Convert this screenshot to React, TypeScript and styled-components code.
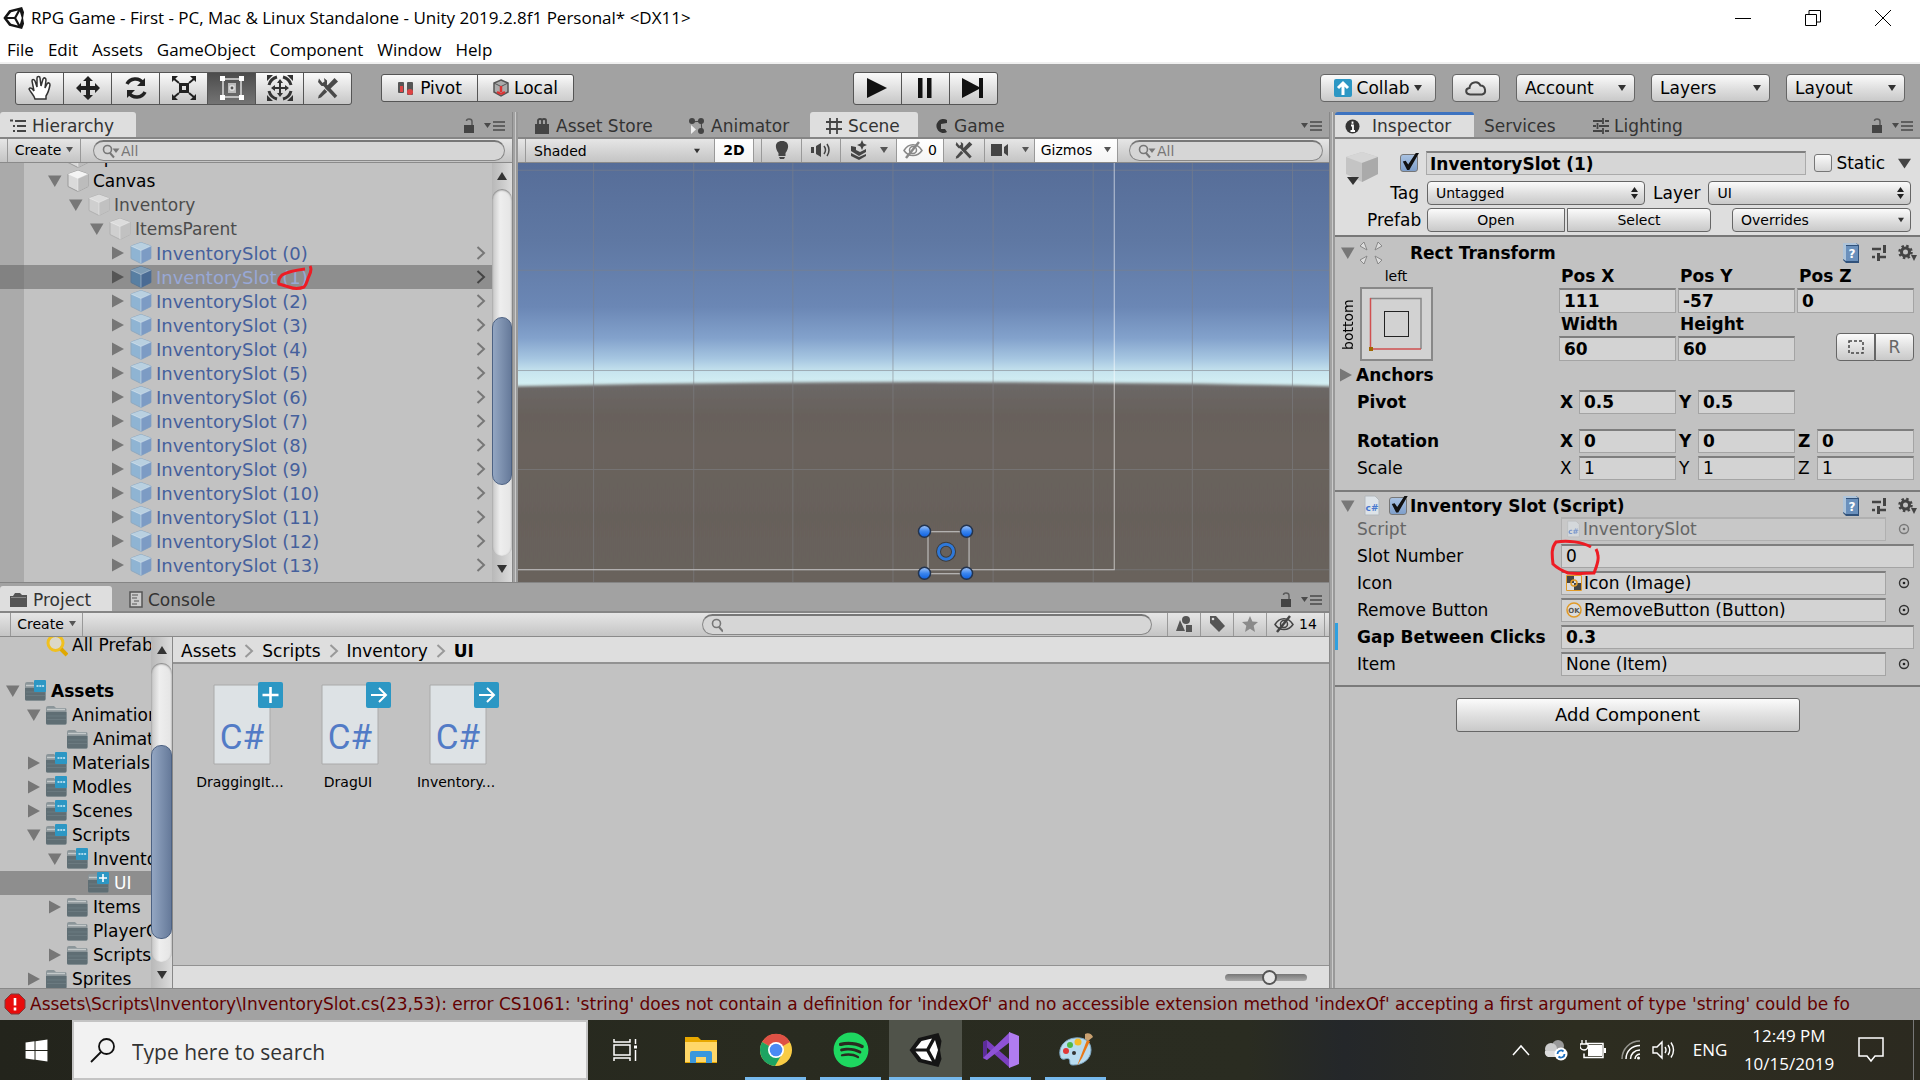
import React from "react";
import styled, { createGlobalStyle, css } from "styled-components";
import { FaSpotify, FaWindows } from "react-icons/fa";

const ui = `"DejaVu Sans", Verdana, sans-serif`;
const system = `"Open Sans", "Segoe UI", sans-serif`;

const Global = createGlobalStyle`
  * { box-sizing: border-box; }
  body { margin: 0; background: #a2a2a2; font-family: ${ui}; font-size: 17px; color: #000; }
  button, input, select { font: inherit; color: inherit; margin: 0; }
  button { cursor: default; }
  svg { display: block; flex: none; }
`;

/* ---------- icons ---------- */

const Caret = ({ size = 8, color = "#333" }: { size?: number; color?: string }) => (
  <svg width={size} height={size} viewBox="0 0 8 8"><path d="M0 1h8L4 7z" fill={color} /></svg>
);
const Fold = ({ open, dark }: { open?: boolean; dark?: boolean }) => (
  <svg width="14" height="14" viewBox="0 0 14 14">
    <path d={open ? "M0 1.500h13.500L6.800 13z" : "M1 .5v13L13 7z"} fill={dark ? "#555" : "#777"} />
  </svg>
);
const Cube = ({ tone, size = 24 }: { tone: "plain" | "faded" | "blue" | "dark"; size?: number }) => {
  const c = {
    plain: ["#f4f4f4", "#dadada", "#bcbcbc", "#9a9a9a"],
    faded: ["#dcdcdc", "#cfcfcf", "#c1c1c1", "#b0b0b0"],
    blue: ["#b9d0e0", "#8fb4d3", "#7c9bc4", "#8fa9c0"],
    dark: ["#7f9db6", "#587fa2", "#4a6b94", "#5a7794"],
  }[tone];
  return (
    <svg width={size} height={size} viewBox="0 0 24 24">
      <path d="M12 1.500 22 5v12.500L12 22.500 2 17.500V5z" fill={c[1]} stroke={c[3]} strokeWidth="1" />
      <path d="M12 1.500 22 5 12 9.500 2 5z" fill={c[0]} />
      <path d="M22 5v12.500L12 22.500v-13z" fill={c[2]} />
      <path d="M2 5 12 9.500 22 5M12 9.500v13" stroke="#fff" strokeOpacity=".35" fill="none" />
    </svg>
  );
};
const Lock = () => (
  <svg width="12" height="18" viewBox="0 0 12 18">
    <path d="M9 8V4.500C9 2.800 7.500 2 6 2S3.500 2.800 3.500 4" fill="none" stroke="#5a5a5a" strokeWidth="1.500" />
    <rect x="1" y="8" width="10" height="8" fill="#444" />
  </svg>
);
const PaneMenu = () => (
  <svg width="21" height="14" viewBox="0 0 21 14">
    <path d="M0 4h7L3.500 9z" fill="#4a4a4a" />
    <path d="M9 3h12M9 7h12M9 11h12" stroke="#4a4a4a" strokeWidth="1.600" />
  </svg>
);
const Magnifier = ({ menu }: { menu?: boolean }) => (
  <svg width={menu ? 18 : 12} height="16" viewBox={menu ? "0 0 18 16" : "0 0 12 16"}>
    <circle cx="5.500" cy="6.500" r="4" fill="none" stroke="#777" strokeWidth="1.600" />
    <path d="m8 10 4 4.500" stroke="#777" strokeWidth="2" />
    {menu && <path d="M10.500 5.500h7L14 10z" fill="#777" />}
  </svg>
);
const Chevron = ({ color = "#777" }: { color?: string }) => (
  <svg width="10" height="14" viewBox="0 0 10 14"><path d="m1.500 1 6.500 6-6.500 6" fill="none" stroke={color} strokeWidth="2" /></svg>
);
const UnityMark = ({ size }: { size: number }) => (
  <svg width={size} height={size} viewBox="0 0 33 34">
    <path d="M0 17 9 5 29 0l3 8-1.500 9L32 26l-3 8-20-5z" fill="#151515" />
    <path d="M6 15.500 12 8l10.500-2.500L17 15.500zM6 18.500h11l5.500 10L12 26zM20 17l5.500-10L28.500 17l-3 10z" fill="#fff" />
  </svg>
);
const Wrench = ({ size = 24 }: { size?: number }) => (
  <svg width={size} height={size} viewBox="0 0 24 24">
    <path d="m8 8 12 13" stroke="#4a4a4a" strokeWidth="3.400" />
    <path d="M3 2.500 2 6l3.500 4H9l2-2V4.500L8 2l.5 3.500L6.500 7z" fill="#4a4a4a" />
    <path d="M18.500 2 22 5.500 12 15l-3-3z" fill="#4a4a4a" />
    <path d="m8.500 13 2.700 2.700L5 21.500l-3 1 .8-3z" fill="#4a4a4a" />
  </svg>
);
const EyeOff = ({ light }: { light?: boolean }) => (
  <svg width="20" height="18" viewBox="0 0 20 18" fill="none" stroke={light ? "#888" : "#444"}>
    <path d="M1 9.500C4 4.500 8 3.800 10 3.800s6 .9 9 5.700c-3 4.500-7 5-9 5s-6-.5-9-5z" strokeWidth="1.500" />
    <circle cx="10" cy="9" r="3.500" strokeWidth="1.500" />
    <path d="M3 17 16 1" strokeWidth="2.500" />
  </svg>
);
const Folder = ({ badge }: { badge?: "more" | "plus" }) => (
  <svg width="22" height="22" viewBox="0 0 22 22">
    <path d="M1 4q0-2 2-2h6l2 2h9q1.500 0 1.500 1.500V19q0 1.500-1.500 1.500H2.500Q1 20.500 1 19z" fill="#8b9599" />
    <path d="M2 5.500h18" stroke="#c4c9ca" strokeWidth="1.500" />
    <path d="M1 8h20.500v11q0 1.500-1.500 1.500H2.500Q1 20.500 1 19z" fill="#5f6e74" />
    <path d="M2 12h19M2 15.500h19" stroke="#6b7a80" />
    {badge && <rect x="10" y="0" width="12" height="12" rx="1" fill="#2c97c4" />}
    {badge === "more" && <path d="M12.500 6h2m.8 0h2m.8 0h2" stroke="#d8f0fa" strokeWidth="1.600" />}
    {badge === "plus" && <path d="M16 2v8M12 6h8" stroke="#fff" strokeWidth="1.600" />}
  </svg>
);
const Book = () => (
  <svg width="18" height="22" viewBox="0 0 18 22">
    <path d="M1 1h13l3 2v18H4l-3-3z" fill="#31527b" />
    <path d="M4 4h12v15H4z" fill="#6a90bc" /><path d="M1 1h13l2 2H4v16l-3-2z" fill="#aec4da" />
    <text x="10" y="16" textAnchor="middle" fontSize="12" fontWeight="bold" fill="#fff">?</text>
  </svg>
);
const Preset = () => (
  <svg width="16" height="20" viewBox="0 0 16 20" stroke="#444">
    <path d="M1 6h9M1 14h3M9 14h6" strokeWidth="2.500" /><path d="M13.500 2v8M7.500 10v8" strokeWidth="3" />
  </svg>
);
const Gear = () => (
  <svg width="20" height="20" viewBox="0 0 20 20">
    <circle cx="7.500" cy="9" r="4" fill="none" stroke="#444" strokeWidth="3" />
    <circle cx="7.500" cy="9" r="6" fill="none" stroke="#444" strokeWidth="2.500" strokeDasharray="2.400 2.310" />
    <path d="M13 12h6l-3 6z" fill="#444" />
  </svg>
);
const ScriptIcon = ({ faded, size = 18 }: { faded?: boolean; size?: number }) => (
  <svg width={size} height={size + 3} viewBox="0 0 18 21" opacity={faded ? 0.6 : 1}>
    <path d="M2 1h10l4 4v15H2z" fill="#dde3e8" stroke="#b4b8bb" />
    <text x="9" y="16" textAnchor="middle" fontSize="9" fill="#4778cf" fontWeight="bold">c#</text>
  </svg>
);
const Target = ({ faded }: { faded?: boolean }) => (
  <svg width="12" height="12" viewBox="0 0 12 12" opacity={faded ? 0.5 : 1}>
    <circle cx="6" cy="6" r="4.500" fill="none" stroke="#333" strokeWidth="1.400" /><circle cx="6" cy="6" r="1.300" fill="#222" />
  </svg>
);

/* ---------- window chrome ---------- */

const Window = styled.div`display: flex; flex-direction: column; min-height: 100vh;`;
const TitleBar = styled.header`
  display: flex; align-items: center; height: 36px; padding: 0 2px 0 3px;
  background: #fff; font: 17px/24px ${system};
`;
const TitleText = styled.h1`margin: 0; padding-left: 6px; flex: 1; font: inherit; white-space: nowrap;`;
const WindowButton = styled.button`
  display: grid; place-items: center; width: 70px; height: 34px; padding: 0; border: 0; background: none;
`;
const MenuBar = styled.nav`
  display: flex; gap: 14px; height: 28px; padding: 1px 7px 0; background: #fff; border-bottom: 2px solid #f0f0f0;
  font: 17px/24px ${system};
`;
const MenuItem = styled.button`padding: 0; border: 0; background: none;`;

const face = css`
  background: linear-gradient(#fbfbfb, #dedede 55%, #c9c9c9); border: 1px solid #666;
`;
const MainToolbar = styled.div`
  display: grid; grid-template-columns: 48fr auto 52fr; align-items: center; height: 48px; padding: 0 15px;
  background: #a2a2a2;
`;
const ToolSide = styled.div<{ $end?: boolean }>`
  display: flex; align-items: center; gap: ${p => (p.$end ? 16 : 29)}px; justify-content: ${p => (p.$end ? "flex-end" : "flex-start")};
`;
const Group = styled.div`
  display: flex; border: 1px solid #555; border-radius: 3px; overflow: hidden; background: #555; gap: 1px;
`;
const Tool = styled.button<{ $active?: boolean }>`
  display: grid; place-items: center; width: 47px; height: 31px; padding: 0; border: 0;
  background: ${p => (p.$active ? "linear-gradient(#4c4c4c, #747474)" : "linear-gradient(#fafafa, #dedede 55%, #c6c6c6)")};
`;
const WordTool = styled.button`
  display: flex; align-items: center; justify-content: center; gap: 5px; width: 95px; height: 26px; padding: 0; border: 0; font-size: 17px;
  background: linear-gradient(#fafafa, #dedede 55%, #cdcdcd);
`;
const BarButton = styled.button<{ $w: number }>`
  ${face} display: flex; align-items: center; justify-content: center; gap: 5px; width: ${p => p.$w}px; height: 28px; padding: 0; border-radius: 4px;
`;

const SelectBox = styled.span<{ $w?: number; $grow?: boolean; $small?: boolean; $flat?: boolean }>`
  ${p => !p.$flat && face}
  display: flex; align-items: center; height: ${p => (p.$small ? 24 : 28)}px; border-radius: 4px; padding-right: ${p => (p.$small ? 6 : 8)}px;
  ${p => p.$w && `width: ${p.$w}px;`} ${p => p.$grow && "flex: 1; min-width: 0;"}
  font-size: ${p => (p.$small ? 14 : 17)}px;
  select { appearance: none; flex: 1; min-width: 0; height: 100%; border: 0; background: none; padding: 0 0 0 8px; }
`;
type DropProps = { label: string; value: string; w?: number; grow?: boolean; small?: boolean; flat?: boolean; updown?: boolean; id?: string };
const Drop = ({ label, value, w, grow, small, flat, updown, id }: DropProps) => (
  <SelectBox $w={w} $grow={grow} $small={small} $flat={flat}>
    <select id={id} aria-label={label}><option>{value}</option></select>
    {updown ? (
      <svg width="7" height="14" viewBox="0 0 7 14"><path d="M0 6h7L3.500 1zM0 8h7l-3.500 5z" fill="#222" /></svg>
    ) : <Caret size={small ? 6 : 8} />}
  </SelectBox>
);

/* ---------- dock ---------- */

const Dock = styled.main`display: flex; flex: 1; min-height: 0; background: #a2a2a2;`;
const Left = styled.div`display: flex; flex-direction: column; flex: 1; min-width: 0;`;
const Upper = styled.div`display: flex; flex: 1; min-height: 0;`;
const Pane = styled.section<{ $w?: number; $h?: number }>`
  display: flex; flex-direction: column; min-width: 0; min-height: 0;
  ${p => (p.$w ? `flex: none; width: ${p.$w}px;` : p.$h ? `flex: none; height: ${p.$h}px;` : "flex: 1;")}
`;
const Splitter = styled.div<{ $row?: boolean }>`
  flex: none; background: linear-gradient(90deg, #888 1px, #a2a2a2 1px, #a2a2a2 3px, #cacaca 3px, #cacaca 4px, #999 4px);
  ${p => (p.$row ? "height: 4px; background: #a2a2a2; border-top: 1px solid #858585;" : "width: 6px;")}
`;
const Tabs = styled.div`
  display: flex; align-items: stretch; height: 27px; padding-right: 7px; background: #a2a2a2; border-bottom: 2px solid #858585;
`;
const Tab = styled.button<{ $w: number; $active?: boolean; $focus?: boolean; $gap?: number }>`
  display: flex; align-items: center; gap: ${p => p.$gap ?? 5}px; width: ${p => p.$w}px; padding: 2px 0 0 10px; border: 0; color: #333; white-space: nowrap;
  background: ${p => (p.$active ? "#dedede" : "none")}; border-radius: 3px 3px 0 0;
  ${p => p.$focus && "border-top: 3px solid #3d73c0; padding-top: 0;"}
`;
const TabTail = styled.div`display: flex; align-items: center; gap: 9px; margin-left: auto; padding-top: 2px;`;
const Strip = styled.div`
  display: flex; align-items: stretch; flex: none; height: 24px; font-size: 14px;
  background: linear-gradient(#e6e6e6, #c4c4c4); border-bottom: 1px solid #8a8a8a;
`;
const StripButton = styled.button<{ $w: number; $on?: boolean }>`
  display: flex; align-items: center; justify-content: center; gap: 5px; width: ${p => p.$w}px; padding: 0 0 2px; border: 0; border-right: 1px solid #999;
  background: ${p => (p.$on ? "linear-gradient(#fff, #f4f4f4)" : "none")}; font-weight: normal;
`;
const StripGap = styled.span<{ $w: number }>`width: ${p => p.$w}px; border-right: 1px solid #999;`;
const StripEnd = styled.span<{ $w: number }>`width: ${p => p.$w}px; flex: none;`;
const Fill = styled.span`flex: 1;`;
const Search = styled.label<{ $w?: number }>`
  display: flex; align-items: center; gap: 1px; height: 21px; align-self: center; padding: 0 8px; border: 1px solid #888; border-top: 2px solid #777;
  border-radius: 11px; background: #d6d6d6; ${p => (p.$w ? `width: ${p.$w}px;` : "flex: 1;")} min-width: 0;
  input { flex: 1; min-width: 0; width: 0; border: 0; background: none; padding: 0; height: 18px; outline: 0; }
  input::placeholder { color: #777; opacity: 1; }
`;

/* ---------- trees ---------- */

const TreeFrame = styled.div<{ $w?: number }>`
  display: flex; min-height: 0; background: #c2c2c2; ${p => (p.$w ? `flex: none; width: ${p.$w}px; border-right: 1px solid #888;` : "flex: 1 1 0;")}
`;
const Tree = styled.ul<{ $shift: number; $gutter?: boolean }>`
  list-style: none; margin: 0; padding: 0; flex: 1; min-width: 0; overflow: hidden; height: 100%;
  background: ${p => (p.$gutter ? "linear-gradient(90deg, #aaa 24px, #c2c2c2 24px)" : "#c2c2c2")};
  & > li:first-child { margin-top: -${p => p.$shift}px; }
`;
const Row = styled.li<{ $indent: number; $selected?: boolean; $color?: string; $prefab?: boolean; $bold?: boolean; $spaced?: boolean }>`
  display: flex; align-items: center; height: 24px; padding-left: ${p => p.$indent}px; padding-right: 6px; white-space: nowrap;
  color: ${p => p.$color || "#000"}; font-size: ${p => (p.$prefab ? 18 : 17)}px; font-weight: ${p => (p.$bold ? "bold" : "normal")};
  margin-bottom: ${p => (p.$spaced ? 22 : 0)}px;
  background: ${p => (p.$selected ? "rgba(90, 90, 90, .5)" : "none")};
  & > svg:first-child { margin-right: 4px; }
  & > svg:last-child { margin-left: auto; }
`;
const RowLabel = styled.span<{ $wide?: boolean }>`position: relative; margin-left: ${p => (p.$wide ? 5 : 3)}px;`;
const ScribbleRow = styled.svg`position: absolute; right: -6px; top: -2px; z-index: 1;`;
const NoFold = styled.span`width: 18px; flex: none;`;

const ScrollBar = styled.div<{ $w: number }>`
  display: flex; flex-direction: column; flex: none; width: ${p => p.$w}px; background: linear-gradient(90deg, #b8b8b8, #dcdcdc);
`;
const ScrollButton = styled.button`display: grid; place-items: center; height: 26px; padding: 0; border: 0; background: none; flex: none;`;
const Track = styled.div<{ $before: number }>`
  flex: 1; border-radius: 10px; padding-top: ${p => p.$before}px; background: linear-gradient(90deg, #c4c4c4, #eee 40%, #e4e4e4); box-shadow: inset 0 1px 2px #777;
`;
const Thumb = styled.div<{ $h: number }>`
  height: ${p => p.$h}px; border: 1px solid #4d6283; border-radius: 10px; background: linear-gradient(90deg, #93a6c2, #667a9a);
`;
const Scroll = ({ w, before, thumb }: { w: number; before: number; thumb: number }) => (
  <ScrollBar $w={w}>
    <ScrollButton aria-label="Scroll up"><svg width="10" height="8" viewBox="0 0 10 8"><path d="M0 8h10L5 0z" fill="#333" /></svg></ScrollButton>
    <Track $before={before}><Thumb $h={thumb} /></Track>
    <ScrollButton aria-label="Scroll down"><svg width="10" height="8" viewBox="0 0 10 8"><path d="M0 0h10L5 8z" fill="#333" /></svg></ScrollButton>
  </ScrollBar>
);

/* ---------- scene ---------- */

const SceneView = styled.div`
  flex: 1 1 0; min-height: 0; overflow: hidden; svg { width: 100%; height: 100%; }
`;
const Scene = () => (
  <SceneView>
    <svg viewBox="0 0 810 419" preserveAspectRatio="xMidYMid slice" role="img" aria-label="Scene view">
      <defs>
        <linearGradient id="sky" x1="0" y1="0" x2="0" y2="1">
          <stop offset="0" stopColor="#566d98" /><stop offset=".35" stopColor="#5f78a3" /><stop offset=".64" stopColor="#6b87b5" />
          <stop offset=".78" stopColor="#83a2cc" /><stop offset=".87" stopColor="#a6c6e1" /><stop offset=".93" stopColor="#c8e5ef" /><stop offset="1" stopColor="#d8f3f5" />
        </linearGradient>
        <linearGradient id="ground" x1="0" y1="0" x2="0" y2="1">
          <stop offset="0" stopColor="#6d6868" /><stop offset=".15" stopColor="#67615b" /><stop offset=".3" stopColor="#6a625d" />
          <stop offset=".6" stopColor="#66615a" /><stop offset="1" stopColor="#6a625c" />
        </linearGradient>
        <linearGradient id="knob" x1="0" y1="0" x2="0" y2="1"><stop offset="0" stopColor="#a8c8f8" /><stop offset=".5" stopColor="#3c86ee" /><stop offset="1" stopColor="#0a5ee0" /></linearGradient>
        <filter id="haze" x="-5%" y="-5%" width="110%" height="110%"><feGaussianBlur stdDeviation="0 1.500" /></filter>
      </defs>
      <rect width="810" height="225" fill="url(#sky)" />
      <path d="M-40 224Q405 214 850 224v220H-40z" fill="url(#ground)" filter="url(#haze)" />
      <path d="M75.500 0v419M175.500 0v419M274.500 0v419M374.500 0v419M474.500 0v419M574.500 0v419M673.500 0v419M773.500 0v419M0 7.500h810M0 107.500h810M0 207.500h810M0 306.500h810M0 406.500h810" stroke="#7f8286" strokeOpacity=".55" />
      <path d="M595.500 0v406.500H0" fill="none" stroke="#fff" strokeOpacity=".6" />
      <path d="M409.500 368.500h41v42h-41z" fill="none" stroke="#ccc" />
      <circle cx="427.500" cy="388.500" r="7.500" fill="none" stroke="#3d3d3d" strokeWidth="5" />
      <circle cx="427.500" cy="388.500" r="7.500" fill="none" stroke="#2f78d8" strokeWidth="3" />
      {[[406, 368], [448, 368], [406, 410], [448, 410]].map(([x, y]) => (
        <circle key={`${x}-${y}`} cx={x} cy={y} r="6" fill="url(#knob)" stroke="#23344f" strokeWidth="1.500" />
      ))}
    </svg>
  </SceneView>
);

/* ---------- project ---------- */

const ProjectBody = styled.div`display: flex; flex: 1; min-height: 0;`;
const Browser = styled.div`display: flex; flex-direction: column; flex: 1; min-width: 0; background: #c2c2c2;`;
const Crumbs = styled.nav`
  display: flex; align-items: center; gap: 8px; height: 27px; padding: 2px 8px 0; background: #dedede; border-bottom: 2px solid #929292;
  a { color: inherit; text-decoration: none; } a:last-child { font-weight: bold; }
`;
const Assets = styled.div`display: flex; flex: 1; gap: 4px; padding: 18px 16px;`;
const Asset = styled.figure`
  display: flex; flex-direction: column; align-items: center; gap: 8px; width: 104px; margin: 0; font-size: 14px;
  figcaption { padding-right: 2px; }
`;
const AssetFooter = styled.div`
  display: flex; align-items: center; justify-content: flex-end; height: 23px; padding-right: 22px; background: #dedede; border-top: 1px solid #929292;
`;
const Slider = styled.input`
  appearance: none; width: 82px; height: 16px; margin: 0; background: none;
  &::-webkit-slider-runnable-track { height: 7px; border-radius: 4px; background: linear-gradient(#777, #aaa); }
  &::-webkit-slider-thumb { appearance: none; width: 15px; height: 15px; margin-top: -4px; border: 2px solid #555; border-radius: 50%; background: #e6e6e6; }
`;
const AssetFile = ({ name, sign }: { name: string; sign: "plus" | "arrow" }) => (
  <Asset>
    <svg width="92" height="84" viewBox="0 0 92 84">
      <path d="M19 3h56v79H19z" fill="#dde2e5" stroke="#aaa" />
      <text x="47" y="67" textAnchor="middle" fontSize="35" fontFamily="Roboto, sans-serif" fill="#527bc6">C#</text>
      <rect x="63" y="0" width="25" height="26" rx="2" fill="#2c97c4" />
      {sign === "plus" ? <path d="M75.500 5v16M67.500 13h16" stroke="#fff" strokeWidth="2.600" />
        : <path d="M68 13h15M76 6l7 7-7 7" fill="none" stroke="#fff" strokeWidth="2" />}
    </svg>
    <figcaption>{name}</figcaption>
  </Asset>
);

/* ---------- inspector ---------- */

const Inspector = styled.div`display: flex; flex-direction: column; flex: 1; background: #c2c2c2;`;
const ObjectHead = styled.div`
  display: grid; grid-template-columns: 55px 1fr; padding: 12px 9px 2px 10px; background: #dedede; border-bottom: 2px solid #777; height: 98px;
`;
const HeadRows = styled.div`display: flex; flex-direction: column; gap: 3px; & > :first-child { margin-bottom: 3px; }`;
const HeadRow = styled.div`display: flex; align-items: center; height: 24px; gap: 8px;`;
const ShiftRow = styled(HeadRow)`margin-left: -33px;`;
const HeadLabel = styled.label<{ $w?: number }>`width: ${p => (p.$w ? `${p.$w}px` : "auto")}; text-align: right; flex: none;`;
const StaticBox = styled.span`display: flex; align-items: center; gap: 4px; margin-right: 5px;`;
const NameInput = styled.input`
  flex: 1; min-width: 0; height: 24px; padding: 0 3px; font-weight: bold; background: #d6d6d6; border: 1px solid #aaa; border-top: 2px solid #808080;
`;
const Check = styled.input`
  appearance: none; width: 18px; height: 18px; flex: none; border: 1px solid #777; border-radius: 3px; background: linear-gradient(#fafafa, #d6d6d6);
  &:checked { background: linear-gradient(#a9c2e2, #7f9fca); }
  &:checked::after {
    content: ""; display: block; width: 18px; height: 17px; margin-top: -2px; background: #111;
    clip-path: polygon(10% 50%, 26% 46%, 40% 68%, 82% 0, 100% 0, 46% 100%, 34% 100%);
  }
`;
const FlatButton = styled.button<{ $side: "left" | "right" }>`
  ${face} width: ${p => (p.$side === "left" ? 138 : 144)}px; height: 24px; padding: 0; font-size: 14px;
  border-radius: ${p => (p.$side === "left" ? "4px 0 0 4px" : "0 4px 4px 0")};
`;
const Pair = styled.div`display: flex; gap: 2px; flex: none; margin-right: 13px;`;
const Component = styled.section<{ $h: number }>`
  border-bottom: 2px solid #7a7a7a; padding: 4px 6px 0; min-height: ${p => p.$h}px;
`;
const CompHead = styled.div<{ $tight?: boolean }>`
  display: flex; align-items: center; height: ${p => (p.$tight ? 19 : 24)}px; gap: 3px; margin-right: -4px;
  h2 { margin: 0; font-size: 17px; }
`;
const CompTools = styled.span`display: flex; align-items: center; gap: 11px; margin-left: auto;`;
const HeadSpace = styled.span<{ $w: number }>`width: ${p => p.$w}px;`;

const RectGrid = styled.div`display: flex; justify-content: space-between; height: 96px;`;
const AnchorArea = styled.div`
  display: grid; grid-template: 22px 75px / 18px 74px; justify-items: center; font-size: 14px;
  span:first-child { grid-column: 2; align-self: center; }
`;
const Vertical = styled.span`writing-mode: vertical-rl; transform: rotate(180deg); text-align: center; line-height: 16px; margin-right: 4px;`;
const Triples = styled.div`display: grid; grid-template-columns: repeat(3, 117px); grid-template-rows: 48px 48px; gap: 0 2px; width: 355px;`;
const Cell = styled.label`display: flex; flex-direction: column; font-weight: bold; line-height: 23px; span { padding-left: 2px; }`;
const fieldLook = css`background: #d3d3d3; border: 1px solid #a4a4a4; border-top: 2px solid #7e7e7e;`;
const Field = styled.input<{ $bold?: boolean }>`
  ${fieldLook} flex: 1; min-width: 0; width: 100%; height: 24px; min-height: 24px; padding: 0 4px; font-weight: ${p => (p.$bold ? "bold" : "normal")};
`;
const RawTools = styled.div`display: flex; align-self: end; justify-self: end;`;
const RawButton = styled.button<{ $side: "left" | "right" }>`
  ${face} display: grid; place-items: center; width: 39px; height: 28px; padding: 0; color: #666; font-size: 17px; border-radius: ${p => (p.$side === "left" ? "4px 0 0 4px" : "0 4px 4px 0")};
`;
const PropRow = styled.div<{ $bold?: boolean; $space?: number }>`
  display: flex; align-items: center; height: 27px; margin-top: ${p => p.$space || 0}px; font-weight: ${p => (p.$bold ? "bold" : "normal")};
`;
const PropName = styled.span`flex: 1; padding-left: 16px;`;
const Axes = styled.div`display: grid; grid-template-columns: repeat(3, 116px); gap: 3px; width: 354px;`;
const Axis = styled.label`display: flex; align-items: center; gap: 2px; span { width: 17px; flex: none; }`;
const AnchorsRow = styled.div`display: flex; align-items: center; gap: 3px; height: 27px; margin-left: -2px; font-weight: bold;`;

const ScriptRow = styled.div<{ $bold?: boolean; $changed?: boolean }>`
  display: flex; align-items: center; height: 27px; padding-left: 16px; font-weight: ${p => (p.$bold ? "bold" : "normal")};
  ${p => p.$changed && "margin-left: -6px; padding-left: 19px; border-left: 3px solid #2fa0e0;"}
`;
const ScriptLabel = styled.label<{ $faded?: boolean }>`flex: 1; white-space: nowrap; color: ${p => (p.$faded ? "#666" : "#000")};`;
const ScriptValue = styled.div`position: relative; display: flex; align-items: center; width: 353px;`;
const ObjectField = styled.button<{ $faded?: boolean }>`
  ${fieldLook} display: flex; align-items: center; gap: 2px; flex: 1; height: 24px; padding: 0 4px; text-align: left; font-weight: normal;
  ${p => p.$faded && "color: #666; background: #c8c8c8; border-color: #b0b0b0;"}
`;
const PickButton = styled.button`display: grid; place-items: center; width: 28px; padding: 0 0 0 8px; border: 0; background: none;`;
const ScribbleZero = styled.svg`position: absolute; left: -11px; top: -5px; z-index: 1; pointer-events: none;`;
const AddButton = styled.button`
  ${face} align-self: center; width: 344px; height: 34px; margin-top: 11px; border-radius: 3px; font-size: 18px; padding: 0 0 2px;
`;

/* ---------- status and taskbar ---------- */

const Status = styled.div`
  display: flex; align-items: center; gap: 4px; height: 32px; padding: 0 29px 2px 4px; background: #a2a2a2; border-top: 1px solid #888; color: #630000;
  p { margin: 0; flex: 1; width: 0; overflow: hidden; white-space: nowrap; }
`;
const Taskbar = styled.footer`
  display: flex; height: 60px; color: #fff; font: 17px/24px ${system};
  background: linear-gradient(90deg, #23241c, #292b20 40%, #2a2c21 65%, #24272a 70%, #2d2d20 82%, #2c2a20);
`;
const Start = styled.button`display: grid; place-items: center; width: 72px; border: 0; padding: 0; background: none; color: #fff;`;
const TaskSearch = styled.label`
  display: flex; align-items: center; gap: 16px; width: 516px; padding-left: 16px; background: #f2f2f2; border: 2px solid #c4c4c4; color: #222;
  input { flex: 1; min-width: 0; border: 0; background: none; outline: 0; padding: 3px 0 0; font-size: 21px; }
  input::placeholder { color: #333; opacity: 1; }
`;
const TaskButton = styled.button<{ $open?: boolean; $active?: boolean }>`
  display: grid; place-items: center; width: 75px; padding: 0; border: 0; background: none; position: relative;
  ${p => p.$active && "background: #50534a; background-clip: content-box; padding: 0 1px;"}
  ${p => p.$open && css`&::after { content: ""; position: absolute; bottom: 0; left: ${p.$active ? 1 : 7}px; right: ${p.$active ? 1 : 7}px; height: 3px; background: #76b9ed; }`}
`;
const Tray = styled.div`display: flex; align-items: center; margin-left: auto; padding-right: 6px;`;
const TrayItem = styled.button<{ $w: number }>`display: grid; place-items: center; width: ${p => p.$w}px; height: 60px; padding: 0; border: 0; background: none; color: #fff;`;
const Clock = styled.div`display: flex; flex-direction: column; align-items: center; width: 96px; gap: 4px;`;
const DeskEdge = styled.span`width: 1px; height: 60px; margin-left: 8px; background: #777;`;

const parents: [string, number, "plain" | "faded"][] = [["Canvas", 48, "plain"], ["Inventory", 69, "faded"], ["ItemsParent", 90, "faded"]];

type Dir = { name: string; indent: number; fold?: "open" | "closed"; badge?: "more" | "plus"; bold?: boolean; selected?: boolean };
const dirs: Dir[] = [
  { name: "Assets", indent: 6, fold: "open", badge: "more", bold: true },
  { name: "Animations", indent: 27, fold: "open" },
  { name: "Animator", indent: 48 },
  { name: "Materials", indent: 27, fold: "closed", badge: "more" },
  { name: "Modles", indent: 27, fold: "closed", badge: "more" },
  { name: "Scenes", indent: 27, fold: "closed", badge: "more" },
  { name: "Scripts", indent: 27, fold: "open", badge: "more" },
  { name: "Inventory", indent: 48, fold: "open", badge: "more" },
  { name: "UI", indent: 69, badge: "plus", selected: true },
  { name: "Items", indent: 48, fold: "closed" },
  { name: "PlayerController", indent: 48 },
  { name: "Scripts", indent: 48, fold: "closed" },
  { name: "Sprites", indent: 27, fold: "closed" },
];

const AxisFields = ({ names, values, bold, row }: { names: string[]; values: string[]; bold?: boolean; row: string }) => (
  <Axes>
    {names.map((n, i) => <Axis key={n}><span>{n}</span><Field $bold={bold} defaultValue={values[i]} aria-label={`${row} ${n}`} /></Axis>)}
  </Axes>
);
const HeadTools = () => <CompTools><Book /><Preset /><Gear /></CompTools>;

const ObjectRow = ({ name, value, icon, faded }: { name: string; value: string; icon?: React.ReactNode; faded?: boolean }) => {
  const id = `object-${name.replace(" ", "-")}`;
  return (
    <ScriptRow>
      <ScriptLabel htmlFor={id} $faded={faded}>{name}</ScriptLabel>
      <ScriptValue>
        <ObjectField id={id} $faded={faded}>{icon}{value}</ObjectField>
        <PickButton aria-label={`Pick ${name}`}><Target faded={faded} /></PickButton>
      </ScriptValue>
    </ScriptRow>
  );
};

export default function App() {
  return (
    <Window>
      <Global />
      <TitleBar>
        <UnityMark size={22} />
        <TitleText>RPG Game - First - PC, Mac &amp; Linux Standalone - Unity 2019.2.8f1 Personal* &lt;DX11&gt;</TitleText>
        <WindowButton aria-label="Minimize"><svg width="16" height="16"><path d="M0 8.500h16" stroke="#000" /></svg></WindowButton>
        <WindowButton aria-label="Restore"><svg width="16" height="16" fill="none" stroke="#000"><path d="M.5 4.500h11v11H.5zM4 4V.5h11.500V12H12" /></svg></WindowButton>
        <WindowButton aria-label="Close"><svg width="16" height="16"><path d="m0 0 16 16M16 0 0 16" stroke="#000" /></svg></WindowButton>
      </TitleBar>
      <MenuBar>
        {["File", "Edit", "Assets", "GameObject", "Component", "Window", "Help"].map(m => <MenuItem key={m}>{m}</MenuItem>)}
      </MenuBar>

      <MainToolbar>
        <ToolSide>
          <Group>
            <Tool aria-label="Hand"><svg width="28" height="26" viewBox="0 0 28 26"><path d="M9 24c-1-4-4-6-6-10 1-2 3-1 5 2L6 6c0-2 2-2 3 0l2 6V3c0-2 3-2 3 0l1 8 2-7c1-2 3-1 3 1l-1 8 2-4c1-2 3-1 3 1-1 5-2 8-4 11v3z" fill="#fff" stroke="#333" strokeWidth="1.500" /></svg></Tool>
            <Tool aria-label="Move"><svg width="26" height="26" viewBox="0 0 26 26"><path d="M13 1l5 5h-3v5h5V8l5 5-5 5v-3h-5v5h3l-5 5-5-5h3v-5H6v3l-5-5 5-5v3h5V6H8z" fill="#222" /></svg></Tool>
            <Tool aria-label="Rotate"><svg width="26" height="26" viewBox="0 0 26 26" fill="none" stroke="#222" strokeWidth="3.500"><path d="M4 9c3-6 12-7 16-1M22 17c-3 6-12 7-16 1" /><path d="M22 3v8h-8zM4 23v-8h8z" fill="#222" stroke="none" /></svg></Tool>
            <Tool aria-label="Scale"><svg width="28" height="26" viewBox="0 0 28 26" fill="none" stroke="#222" strokeWidth="2"><path d="M10.500 9.500h7v7h-7z" strokeWidth="3" /><path d="m3 3 6 5M25 3l-6 5M3 23l6-5M25 23l-6-5" /><path d="M2 1h6L2 7zM26 1v6l-6-6zM2 25v-6l6 6zM26 25h-6l6-6z" fill="#222" stroke="none" /></svg></Tool>
            <Tool $active aria-label="Rect"><svg width="26" height="26" viewBox="0 0 26 26" fill="none" stroke="#ddd" strokeWidth="1.500"><path d="M4 4h18v18H4z" /><path d="M9 8h8v10H9z" fill="#bbb" stroke="none" /><circle cx="13" cy="13" r="2.200" fill="#555" /><path d="M1 1h5v5H1zM20 1h5v5h-5zM1 20h5v5H1zM20 20h5v5h-5z" fill="#fff" stroke="none" /></svg></Tool>
            <Tool aria-label="Transform"><svg width="28" height="28" viewBox="0 0 28 28" fill="none" stroke="#333" strokeWidth="2"><path d="M14 8v12M8 14h12" /><path d="m14 5-3 4h6zM14 23l-3-4h6zM5 14l4-3v6zM23 14l-4-3v6z" fill="#333" stroke="none" /><path d="M3 11c1-4 4-7 8-8M17 3c4 1 7 4 8 8M3 17c1 4 4 7 8 8M17 25c4-1 7-4 8-8" strokeWidth="3" /><path d="M1 1h6L1 7zM27 1v6l-6-6zM1 27v-6l6 6zM27 27h-6l6-6z" fill="#333" stroke="none" /></svg></Tool>
            <Tool aria-label="Custom tools"><Wrench /></Tool>
          </Group>
          <Group>
            <WordTool><svg width="18" height="16" viewBox="0 0 18 16"><rect x="1" y="2" width="6" height="11" rx="1" fill="#555" /><rect x="3" y="6" width="3" height="6" fill="#d44" /><rect x="10" y="2" width="6" height="13" rx="1" fill="#555" /><circle cx="13" cy="12" r="3" fill="#d44" /></svg>Pivot</WordTool>
            <WordTool><svg width="16" height="18" viewBox="0 0 16 18"><path d="M8 1l7 3v9l-7 4-7-4V4z" fill="#aaa" stroke="#555" strokeWidth="1.500" /><path d="M1 4l7 3.500L15 4" fill="none" stroke="#555" /><path d="M8 7v6m0 2-4-2m4 2 4-2" stroke="#d33" strokeWidth="2.500" /></svg>Local</WordTool>
          </Group>
        </ToolSide>
        <Group>
          <Tool aria-label="Play"><svg width="22" height="20" viewBox="0 0 22 20"><path d="M1 0v20l20-10z" fill="#111" /></svg></Tool>
          <Tool aria-label="Pause"><svg width="14" height="20" viewBox="0 0 14 20"><path d="M0 0h4.500v20H0zM9 0h4.500v20H9z" fill="#111" /></svg></Tool>
          <Tool aria-label="Step"><svg width="22" height="20" viewBox="0 0 22 20"><path d="M0 0v20l17-9v9h4V0h-4v9z" fill="#111" /></svg></Tool>
        </Group>
        <ToolSide $end>
          <BarButton $w={116}><svg width="18" height="18" viewBox="0 0 18 18"><rect width="18" height="18" rx="2" fill="#2c97c4" /><path d="M9 16V4M4 9l5-5 5 5" fill="none" stroke="#fff" strokeWidth="3" /></svg>Collab <Caret /></BarButton>
          <BarButton $w={48} aria-label="Cloud"><svg width="22" height="18" viewBox="0 0 22 18"><path d="M5 15.500C0 15 0 9.500 4.500 9 5 3 13 1 15.500 6.500c5 0 6.500 8 1.500 9z" fill="none" stroke="#444" strokeWidth="2" /></svg></BarButton>
          <Drop label="Account" value="Account" w={119} />
          <Drop label="Layers" value="Layers" w={119} />
          <Drop label="Layout" value="Layout" w={119} />
        </ToolSide>
      </MainToolbar>

      <Dock>
        <Left>
          <Upper>
            <Pane $w={512}>
              <Tabs>
                <Tab $w={136} $active $gap={6}><svg width="16" height="14" viewBox="0 0 16 14" stroke="#444" strokeWidth="1.800"><path d="M0 1.500h3M5 2h11M3 7h2M7 7h9M3 12h2M7 12h9" /></svg>Hierarchy</Tab>
                <TabTail><Lock /><PaneMenu /></TabTail>
              </Tabs>
              <Strip>
                <StripGap $w={8} />
                <StripButton $w={73}>Create <Caret size={7} color="#555" /></StripButton>
                <StripEnd $w={12} />
                <Search><Magnifier menu /><input aria-label="Search hierarchy" placeholder="All" /></Search>
                <StripEnd $w={7} />
              </Strip>
              <TreeFrame>
                <Tree $shift={18} $gutter>
                  <Row $indent={48}><NoFold /><Cube tone="plain" /><RowLabel>Sphere</RowLabel></Row>
                  {parents.map(([name, indent, tone]) => (
                    <Row key={name} $indent={indent} $color={tone === "faded" ? "#4c4c4c" : "#000"}>
                      <Fold open /><Cube tone={tone} /><RowLabel>{name}</RowLabel>
                    </Row>
                  ))}
                  {Array.from({ length: 14 }, (_, i) => (
                    <Row key={i} $indent={111} $prefab $selected={i === 1} $color={i === 1 ? "#98a8d6" : "#45609c"}>
                      <Fold dark={i === 1} /><Cube tone={i === 1 ? "dark" : "blue"} />
                      <RowLabel>
                        InventorySlot ({i})
                        {i === 1 && (
                          <ScribbleRow width="38" height="26" viewBox="0 0 38 26"><path d="M34 1c2 3 1 6-1 10-2 4-2 8-5 11-5 2-10 2-15 0L3 19c-1-3 0-6 3-9 7-4 15-5 23-6" fill="none" stroke="#ed1c24" strokeWidth="3" /></ScribbleRow>
                        )}
                      </RowLabel>
                      <Chevron color={i === 1 ? "#444" : "#777"} />
                    </Row>
                  ))}
                </Tree>
                <Scroll w={20} before={128} thumb={168} />
              </TreeFrame>
            </Pane>
            <Splitter />
            <Pane>
              <Tabs>
                <Tab $w={155}><HeadSpace $w={0} /><svg width="18" height="18" viewBox="0 0 18 18"><path d="M2 7h14v10H2z" fill="#444" /><path d="M5 7V3.500Q5 2 7 2t2 1.500V7m0-3.500Q9 2 11 2t2 1.500V7" fill="none" stroke="#444" strokeWidth="1.800" /></svg>Asset Store</Tab>
                <Tab $w={137}><HeadSpace $w={0} /><svg width="18" height="18" viewBox="0 0 18 18"><path d="M4 5 14 4M13 4l1 10" stroke="#444" /><circle cx="4" cy="4" r="3" fill="#444" /><circle cx="13" cy="4" r="3" fill="#444" /><circle cx="13" cy="14" r="3" fill="#444" /><path d="M3 8v9l5-4.500z" fill="#eee" /></svg>Animator</Tab>
                <Tab $w={108} $active><HeadSpace $w={0} /><svg width="18" height="18" viewBox="0 0 18 18" stroke="#444" strokeWidth="1.800"><path d="M5 1v16M12 1v16M1 5h16M1 12h16" /></svg>Scene</Tab>
                <Tab $w={110} $gap={6}><HeadSpace $w={0} /><svg width="14" height="16" viewBox="0 0 14 16"><path d="M13 2a7 7 0 1 0 0 12l-2-3H7V6l6-1z" fill="#333" /></svg>Game</Tab>
                <TabTail><PaneMenu /></TabTail>
              </Tabs>
              <Strip>
                <StripGap $w={8} />
                <Drop label="Draw mode" value="Shaded" w={180} small flat />
                <StripGap $w={9} />
                <StripButton $w={39} $on><b>2D</b></StripButton>
                <StripGap $w={8} />
                <StripButton $w={40} aria-label="Lighting"><svg width="14" height="20" viewBox="0 0 14 20"><path d="M7 1c8 0 7 8 3.500 12v3h-7v-3C0 9-1 1 7 1zM4 17h6l-1 2H5z" fill="#444" /></svg></StripButton>
                <StripButton $w={39} aria-label="Audio"><svg width="20" height="16" viewBox="0 0 20 16"><path d="M0 5h3v6H0zM5 4l5-3v14l-5-3z" fill="#444" /><path d="M13 4q3 4 0 8M16 2q4 6 0 12" fill="none" stroke="#444" strokeWidth="1.500" /></svg></StripButton>
                <StripButton $w={56} aria-label="Effects"><svg width="18" height="20" viewBox="0 0 18 20"><path d="m12 0 1.500 3.500L17 5l-3.500 1.500L12 10l-1.500-3.500L7 5l3.500-1.500z" fill="#444" /><path d="m1 6 5 1v3l4 2 6-3v3l-7 4-8-5z" fill="#444" /><path d="m1 13 8 4 7-3v2l-7 4-8-4z" fill="#444" /></svg><StripEnd $w={2} /><Caret size={8} color="#555" /></StripButton>
                <StripButton $w={47} $on><EyeOff light />0</StripButton>
                <StripButton $w={41} aria-label="Component tools"><Wrench size={20} /></StripButton>
                <StripButton $w={50} aria-label="Camera"><svg width="20" height="16" viewBox="0 0 20 16"><path d="M1 2h11v12H1zM14 5l4-3v12l-4-3z" fill="#444" /></svg><StripEnd $w={2} /><Caret size={7} color="#555" /></StripButton>
                <StripButton $w={83} $on>Gizmos<StripEnd $w={2} /><Caret size={7} color="#555" /></StripButton>
                <StripEnd $w={11} />
                <Search><Magnifier menu /><input aria-label="Search scene" placeholder="All" /></Search>
                <StripEnd $w={6} />
              </Strip>
              <Scene />
            </Pane>
          </Upper>
          <Splitter $row />
          <Pane $h={402}>
            <Tabs>
              <Tab $w={112} $active $gap={6}><svg width="17" height="16" viewBox="0 0 17 16"><path d="M0 4h3l2-3h5l2 2h5v12H0z" fill="#555" /><path d="M1 5.500h15" stroke="#888" /></svg>Project</Tab>
              <Tab $w={120}><HeadSpace $w={2} /><svg width="14" height="17" viewBox="0 0 14 17"><path d="M1 1h12v15H1z" fill="#ccc" stroke="#555" strokeWidth="1.500" /><path d="M3 4h6M3 7h5M5 10h5M3 13h5" stroke="#555" /></svg>Console</Tab>
              <TabTail><Lock /><PaneMenu /></TabTail>
            </Tabs>
            <Strip>
              <StripGap $w={11} />
              <StripButton $w={72}>Create <Caret size={7} color="#555" /></StripButton>
              <Fill />
              <Search $w={450}><Magnifier /><input aria-label="Search project" /></Search>
              <StripGap $w={16} />
              <StripButton $w={33} aria-label="Filter by type"><svg width="18" height="18" viewBox="0 0 18 18"><circle cx="11" cy="5" r="4" fill="#555" /><path d="m5 5 5 11H1zM11 10h6v7h-6z" fill="#555" /></svg></StripButton>
              <StripButton $w={33} aria-label="Filter by label"><svg width="18" height="18" viewBox="0 0 18 18"><path d="M2 1h6l9 10-6 6-9-9z" fill="#555" /><circle cx="5" cy="4" r="1.300" fill="#ddd" /></svg></StripButton>
              <StripButton $w={33} aria-label="Favorite"><svg width="16" height="16" viewBox="0 0 16 16"><path d="m8 0 2.400 5.500 5.600.5-4.300 3.800L13 16l-5-3.200L3 16l1.300-6.200L0 6l5.600-.5z" fill="#8a8a8a" /></svg></StripButton>
              <StripButton $w={58}><EyeOff />14</StripButton>
              <StripEnd $w={4} />
            </Strip>
            <ProjectBody>
              <TreeFrame $w={173}>
                <Tree $shift={4}>
                  <Row $indent={46} $spaced>
                    <svg width="22" height="24" viewBox="0 0 22 24"><circle cx="9.500" cy="10" r="7.500" fill="#dcd8c8" stroke="#f0c020" strokeWidth="3" /><path d="m15 16 6 6" stroke="#e0a800" strokeWidth="4" /></svg>
                    All Prefabs
                  </Row>
                  {dirs.map((d, i) => (
                    <Row key={i} $indent={d.indent} $bold={d.bold} $selected={d.selected} $color={d.selected ? "#fff" : undefined}>
                      {d.fold ? <Fold open={d.fold === "open"} /> : <NoFold />}
                      <Folder badge={d.badge} /><RowLabel $wide>{d.name}</RowLabel>
                    </Row>
                  ))}
                </Tree>
                <Scroll w={21} before={82} thumb={194} />
              </TreeFrame>
              <Browser>
                <Crumbs>
                  <a href="#assets">Assets</a><Chevron color="#999" /><a href="#scripts">Scripts</a><Chevron color="#999" />
                  <a href="#inventory">Inventory</a><Chevron color="#999" /><a href="#ui">UI</a>
                </Crumbs>
                <Assets>
                  <AssetFile name="DraggingIt..." sign="plus" />
                  <AssetFile name="DragUI" sign="arrow" />
                  <AssetFile name="Inventory..." sign="arrow" />
                </Assets>
                <AssetFooter><Slider type="range" aria-label="Icon size" defaultValue="55" /></AssetFooter>
              </Browser>
            </ProjectBody>
          </Pane>
        </Left>
        <Splitter />
        <Pane $w={585}>
          <Tabs>
            <Tab $w={139} $active $focus $gap={6}><svg width="15" height="15" viewBox="0 0 15 15"><circle cx="7.500" cy="7.500" r="7" fill="#333" /><path d="M7.500 2.500v2.300M6 6.500h2v5.500M5.500 12h4.500" stroke="#fff" strokeWidth="1.800" fill="none" /></svg><HeadSpace $w={0} />Inspector</Tab>
            <Tab $w={109}>Services</Tab>
            <Tab $w={120}><svg width="16" height="16" viewBox="0 0 16 16" stroke="#444" strokeWidth="1.800"><path d="M0 3h9M12 3h4M0 8h3M6 8h10M0 13h9M12 13h4M10 0v6M4.500 5v6M10 10v6" /></svg>Lighting</Tab>
            <TabTail><Lock /><PaneMenu /></TabTail>
          </Tabs>
          <Inspector>
            <ObjectHead>
              <svg width="34" height="38" viewBox="0 0 34 38"><path d="M17 1 33 6v17L17 31 1 23V6z" fill="#c4c4c4" /><path d="M17 1 33 6 17 12 1 6z" fill="#d6d6d6" /><path d="M33 6v17l-16 8V12z" fill="#aaa" /><path d="M2 26h12l-6 8z" fill="#333" /></svg>
              <HeadRows>
                <HeadRow>
                  <Check type="checkbox" defaultChecked aria-label="Active" />
                  <NameInput defaultValue="InventorySlot (1)" aria-label="Name" />
                  <StaticBox><Check type="checkbox" id="static" /><HeadLabel htmlFor="static">Static</HeadLabel></StaticBox>
                  <Caret size={13} color="#444" />
                </HeadRow>
                <ShiftRow>
                  <HeadLabel $w={52} htmlFor="tag">Tag</HeadLabel><Drop id="tag" label="Tag" value="Untagged" w={218} small updown />
                  <HeadLabel htmlFor="layer">Layer</HeadLabel><Drop id="layer" label="Layer" value="UI" grow small updown />
                </ShiftRow>
                <ShiftRow>
                  <HeadLabel as="span" $w={52}>Prefab</HeadLabel>
                  <Pair><FlatButton $side="left">Open</FlatButton><FlatButton $side="right">Select</FlatButton></Pair>
                  <Drop label="Overrides" value="Overrides" grow small />
                </ShiftRow>
              </HeadRows>
            </ObjectHead>

            <Component $h={255}>
              <CompHead>
                <Fold open />
                <svg width="26" height="26" viewBox="0 0 26 26" fill="#ddd" stroke="#888"><path d="m2 6 4-4 3 8zM24 6l-4-4-3 8zM2 20l4 4 3-8zM24 20l-4 4-3-8z" strokeLinejoin="round" /></svg>
                <HeadSpace $w={20} /><h2>Rect Transform</h2><HeadTools />
              </CompHead>
              <RectGrid>
                <AnchorArea>
                  <span>left</span><Vertical>bottom</Vertical>
                  <svg width="73" height="74" viewBox="0 0 73 74"><rect x="1" y="1" width="71" height="72" fill="#d2d2d2" stroke="#888" strokeWidth="2" /><path d="M10 11.500h51V62" fill="none" stroke="#888" strokeWidth="1.500" /><path d="M10.500 11v51H61" fill="none" stroke="#d05050" strokeWidth="1.500" /><rect x="24.500" y="24.500" width="24" height="25" fill="none" stroke="#222" /><rect x="9" y="60" width="4" height="4" fill="#a06800" /></svg>
                </AnchorArea>
                <Triples>
                  {[["Pos X", "111"], ["Pos Y", "-57"], ["Pos Z", "0"], ["Width", "60"], ["Height", "60"]].map(([n, v]) => (
                    <Cell key={n}><span>{n}</span><Field $bold defaultValue={v} /></Cell>
                  ))}
                  <RawTools>
                    <RawButton $side="left" aria-label="Blueprint mode"><svg width="16" height="14"><rect x="1" y="1" width="14" height="12" fill="none" stroke="#444" strokeWidth="1.500" strokeDasharray="3 2" /></svg></RawButton>
                    <RawButton $side="right">R</RawButton>
                  </RawTools>
                </Triples>
              </RectGrid>
              <AnchorsRow><Fold />Anchors</AnchorsRow>
              <PropRow $bold><PropName>Pivot</PropName><AxisFields row="Pivot" names={["X", "Y"]} values={["0.5", "0.5"]} bold /></PropRow>
              <PropRow $bold $space={12}><PropName>Rotation</PropName><AxisFields row="Rotation" names={["X", "Y", "Z"]} values={["0", "0", "0"]} bold /></PropRow>
              <PropRow><PropName>Scale</PropName><AxisFields row="Scale" names={["X", "Y", "Z"]} values={["1", "1", "1"]} /></PropRow>
            </Component>

            <Component $h={195}>
              <CompHead $tight>
                <Fold open /><HeadSpace $w={2} /><ScriptIcon /><HeadSpace $w={2} />
                <Check type="checkbox" defaultChecked aria-label="Enable Inventory Slot" /><h2>Inventory Slot (Script)</h2><HeadTools />
              </CompHead>
              <ObjectRow name="Script" value="InventorySlot" faded icon={<ScriptIcon faded size={15} />} />
              <ScriptRow>
                <ScriptLabel htmlFor="slot">Slot Number</ScriptLabel>
                <ScriptValue>
                  <Field id="slot" defaultValue="0" />
                  <ScribbleZero width="52" height="38" viewBox="0 0 52 38"><path d="M41 8C32 3 18 1 6 3 1 9 2 16 3 25c4 4 10 7 15 9 9 1 17 0 26 0 2-5 5-12 4-17 0-3-1-5-2-7" fill="none" stroke="#ed1c24" strokeWidth="3" /></ScribbleZero>
                </ScriptValue>
              </ScriptRow>
              <ObjectRow name="Icon" value="Icon (Image)" icon={<svg width="16" height="16" viewBox="0 0 16 16"><path d="M.5.500h15v15H.5z" fill="#ddd" stroke="#e09a28" /><path d="M1 1h7v7H1zM8 8h7v7H8z" fill="#444" /><circle cx="8" cy="8" r="3" fill="none" stroke="#e09a28" strokeWidth="1.500" /></svg>} />
              <ObjectRow name="Remove Button" value="RemoveButton (Button)" icon={<svg width="16" height="16" viewBox="0 0 16 16"><circle cx="8" cy="8" r="7" fill="#ddd" stroke="#e09a28" strokeWidth="1.500" /><text x="8" y="11" fontSize="7" fontWeight="bold" textAnchor="middle" fill="#555">OK</text></svg>} />
              <ScriptRow $bold $changed>
                <ScriptLabel htmlFor="gap">Gap Between Clicks</ScriptLabel>
                <ScriptValue><Field id="gap" $bold defaultValue="0.3" /></ScriptValue>
              </ScriptRow>
              <ObjectRow name="Item" value="None (Item)" />
            </Component>
            <AddButton>Add Component</AddButton>
          </Inspector>
        </Pane>
      </Dock>

      <Status>
        <svg width="22" height="22" viewBox="0 0 22 22"><path d="M7 1h8l6 6v8l-6 6H7l-6-6V7z" fill="#e80c0c" stroke="#7d3a3a" /><path d="M11 5v7.500M11 14.500v3" stroke="#fff" strokeWidth="2.600" /></svg>
        <p>Assets\Scripts\Inventory\InventorySlot.cs(23,53): error CS1061: 'string' does not contain a definition for 'indexOf' and no accessible extension method 'indexOf' accepting a first argument of type 'string' could be fo</p>
      </Status>

      <Taskbar>
        <Start aria-label="Start"><FaWindows size={25} /></Start>
        <TaskSearch>
          <svg width="26" height="26" viewBox="0 0 26 26" fill="none" stroke="#111" strokeWidth="1.800"><circle cx="16.500" cy="9.500" r="7.500" /><path d="M11 15 1 25" /></svg>
          <input aria-label="Search" placeholder="Type here to search" />
        </TaskSearch>
        <TaskButton aria-label="Task view"><svg width="28" height="24" viewBox="0 0 28 24" fill="none" stroke="#fff" strokeWidth="1.500"><path d="M2 1v3h16V1M2 7h16v10H2zM2 23v-3h16v3M23.500 1v5M23.500 12v11" /><path d="M22 7.500h3v3h-3z" fill="#fff" stroke="none" /></svg></TaskButton>
        <TaskButton aria-label="File Explorer"><svg width="34" height="28" viewBox="0 0 34 28"><path d="M1 1h13l3 3h16v23H1z" fill="#e8a800" /><path d="M1 6h32v20H1z" fill="#ffd768" /><path d="M6 27V17q0-2 2-2h18q2 0 2 2v10h-6v-6H12v6z" fill="#3a97dc" /></svg></TaskButton>
        <TaskButton $open aria-label="Chrome"><svg width="34" height="34" viewBox="0 0 34 34"><circle cx="17" cy="17" r="16" fill="#f9cc45" /><path d="M17 17 3.100 9A16 16 0 0 1 31 9z" fill="#de5145" /><path d="M3.100 9A16 16 0 0 0 16 33l7-12-6-4z" fill="#1da462" /><circle cx="17" cy="17" r="8" fill="#fff" /><circle cx="17" cy="17" r="6.300" fill="#4a8af4" /></svg></TaskButton>
        <TaskButton $open aria-label="Spotify"><FaSpotify size={36} color="#1ed760" /></TaskButton>
        <TaskButton $open $active aria-label="Unity"><UnityMark size={34} /></TaskButton>
        <TaskButton $open aria-label="Visual Studio"><svg width="38" height="36" viewBox="0 0 38 36"><path d="m1 10 4-2 23 20v8L1 12z" fill="#7b3fc0" /><path d="M1 10v16l4 2V8z" fill="#5c2d9a" /><path d="M1 26 28 0v10L5 28z" fill="#8e52d6" /><path d="m27 0 10 4v28l-10 4z" fill="#b17cf0" /></svg></TaskButton>
        <TaskButton $open aria-label="Paint"><svg width="36" height="36" viewBox="0 0 36 36"><path d="M17 6C5 7-1 18 3 26c2 3 6-1 8 1s-1 6 4 6c10 0 18-6 18-15S26 5 17 6z" fill="#b9dcf0" stroke="#7fa8c4" /><circle cx="8" cy="19" r="3" fill="#e03838" /><circle cx="12" cy="13" r="3" fill="#4fb848" /><circle cx="20" cy="10" r="3.500" fill="#f4bc28" /><circle cx="16" cy="21" r="2" fill="#333" /><path d="M29 8 19 34l5-8 8-17z" fill="#e87818" /><path d="M27 2c3-2 7 0 8 3l-5 4-3-2z" fill="#c9a070" /></svg></TaskButton>
        <Tray>
          <TrayItem $w={36} aria-label="Show hidden icons"><svg width="18" height="12"><path d="m1 11 8-9 8 9" fill="none" stroke="#fff" strokeWidth="1.500" /></svg></TrayItem>
          <TrayItem $w={34} aria-label="OneDrive"><svg width="26" height="22" viewBox="0 0 26 22"><circle cx="15" cy="7" r="6" fill="#999" /><circle cx="8" cy="10" r="6" fill="#ccc" /><path d="M2 12h16v6H5q-4-2-3-6z" fill="#ddd" /><circle cx="18" cy="15" r="6.500" fill="#fff" /><path d="M14.500 15a3.500 3.500 0 0 1 6-2.500M21.500 15a3.500 3.500 0 0 1-6 2.500" fill="none" stroke="#1a6fc0" strokeWidth="1.800" /></svg></TrayItem>
          <TrayItem $w={40} aria-label="Battery"><svg width="26" height="20" viewBox="0 0 26 20"><path d="M8 5h14v11H8z" fill="#fff" /><path d="M6 3.500h17v14H4v-4" fill="none" stroke="#fff" strokeWidth="1.500" /><path d="M24 8h2v5h-2z" fill="#fff" /><path d="M2 0v4M6 0v4M0 4h8v3q-1 3-4 3t-4-3z" fill="#2c2c20" stroke="#fff" strokeWidth="1.300" /></svg></TrayItem>
          <TrayItem $w={36} aria-label="Network"><svg width="20" height="20" viewBox="0 0 20 20" fill="none" stroke="#fff" strokeWidth="1.500"><path d="M1 19C1 9 9 1 19 1" opacity=".5" /><path d="M5 19C5 11 11 5.500 19 5.500M9.500 19c0-5 4-9 9.500-9M14 19q.5-4.500 5-5" /><circle cx="17.500" cy="18" r="1.500" fill="#fff" stroke="none" /></svg></TrayItem>
          <TrayItem $w={30} aria-label="Volume"><svg width="24" height="20" viewBox="0 0 24 20" fill="none" stroke="#fff" strokeWidth="1.400"><path d="M1 7h4l5-5v16l-5-5H1zM13 7q2 3 0 6M16 5q3.500 5 0 10M19 2.500q5 7.500 0 15" /></svg></TrayItem>
          <TrayItem $w={62}>ENG</TrayItem>
          <Clock><span>12:49 PM</span><span>10/15/2019</span></Clock>
          <TrayItem $w={68} aria-label="Notifications"><svg width="26" height="26" viewBox="0 0 26 26"><path d="M1 1h24v18h-8l-4 5-4-5H1z" fill="none" stroke="#fff" strokeWidth="1.500" /></svg></TrayItem>
          <DeskEdge />
        </Tray>
      </Taskbar>
    </Window>
  );
}
